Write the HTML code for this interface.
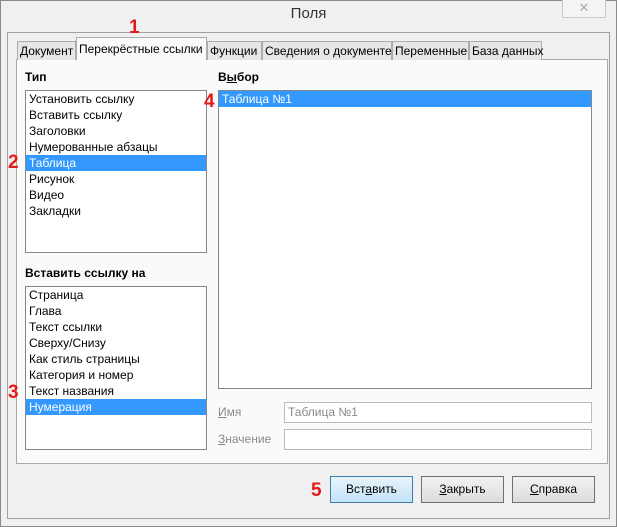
<!DOCTYPE html>
<html><head><meta charset="utf-8"><style>
*{box-sizing:border-box;margin:0;padding:0}
body{width:617px;height:527px;background:#fff;font-family:"Liberation Sans","Noto Sans CJK SC",sans-serif;font-size:12px;color:#000;position:relative;overflow:hidden}
.a{position:absolute}
.win{left:0;top:0;width:617px;height:527px;background:#f0f0f0;border:1px solid #8a8a8a}
.frame{left:7px;top:32px;width:603px;height:487px;border:1px solid #a0a0a0;background:#f0f0f0}
.panel{left:16px;top:59px;width:592px;height:405px;border:1px solid #a9a9a9;background:#fafafa}
.tab{top:41px;height:19px;border:1px solid #acacac;border-bottom:none;background:#e6e6e6;padding:2px 2px 0 2px;white-space:nowrap;font-size:12px}
.tab.on{top:37px;height:23px;background:#fafafa;padding-top:4px}
.list{background:#fff;border:1px solid #828790}
.it{height:16px;line-height:16px;padding-left:3px;white-space:nowrap}
.sel{background:#3399ff;color:#fff}
.lbl{font-weight:bold}
.red{color:#e31b1b;font-weight:bold;font-size:19px}
.btn{top:476px;height:27px;border:1px solid #707070;background:linear-gradient(#f2f2f2,#dcdcdc);text-align:center;line-height:25px}
.inp{background:#fff;border:1px solid #bcbcbc;height:21px;color:#8a8a8a;padding-left:3px;line-height:19px}
u{text-decoration:underline}
</style></head><body>
<div class="a win"></div>
<div class="a" style="left:0;top:4px;width:617px;text-align:center;font-size:15px;color:#333;line-height:20px">Поля</div>
<div class="a" style="left:562px;top:0;width:44px;height:18px;border:1px solid #c8c8c8;border-top:none;background:#f4f4f4;text-align:center;color:#aaa;font-size:13px;line-height:16px">✕</div>
<div class="a frame"></div>
<div class="a panel"></div>
<div class="a tab" style="left:17px;width:59px">Документ</div>
<div class="a tab on" style="left:76px;width:131px">Перекрёстные ссылки</div>
<div class="a tab" style="left:207px;width:55px">Функции</div>
<div class="a tab" style="left:262px;width:130px">Сведения о документе</div>
<div class="a tab" style="left:392px;width:77px">Переменные</div>
<div class="a tab" style="left:469px;width:73px">База данных</div>
<div class="a red" style="left:129px;top:18px;line-height:20px">1</div>

<div class="a lbl" style="left:25px;top:70px">Тип</div>
<div class="a list" style="left:25px;top:90px;width:182px;height:163px">
<div class="it">Установить ссылку</div><div class="it">Вставить ссылку</div><div class="it">Заголовки</div><div class="it">Нумерованные абзацы</div><div class="it sel">Таблица</div><div class="it">Рисунок</div><div class="it">Видео</div><div class="it">Закладки</div></div>
<div class="a red" style="left:8px;top:153px;line-height:20px">2</div>

<div class="a lbl" style="left:25px;top:266px">Вставить ссылку на</div>
<div class="a list" style="left:25px;top:286px;width:182px;height:164px">
<div class="it">Страница</div><div class="it">Глава</div><div class="it">Текст ссылки</div><div class="it">Сверху/Снизу</div><div class="it">Как стиль страницы</div><div class="it">Категория и номер</div><div class="it">Текст названия</div><div class="it sel">Нумерация</div></div>
<div class="a red" style="left:8px;top:383px;line-height:20px">3</div>

<div class="a lbl" style="left:218px;top:70px">В<u>ы</u>бор</div>
<div class="a list" style="left:218px;top:90px;width:374px;height:299px"><div class="it sel" style="margin:0">Таблица №1</div></div>
<div class="a red" style="left:204px;top:92px;line-height:20px">4</div>

<div class="a" style="left:218px;top:405px;color:#8a8a8a"><u>И</u>мя</div>
<div class="a inp" style="left:284px;top:402px;width:308px">Таблица №1</div>
<div class="a" style="left:218px;top:432px;color:#8a8a8a"><u>З</u>начение</div>
<div class="a inp" style="left:284px;top:429px;width:308px"></div>

<div class="a red" style="left:311px;top:481px;line-height:20px">5</div>
<div class="a btn" style="left:330px;width:83px;border-color:#3c7fb1;background:linear-gradient(#e8f4fc,#c4e3f7)">Вст<u>а</u>вить</div>
<div class="a btn" style="left:421px;width:83px"><u>З</u>акрыть</div>
<div class="a btn" style="left:512px;width:83px"><u>С</u>правка</div>
</body></html>
